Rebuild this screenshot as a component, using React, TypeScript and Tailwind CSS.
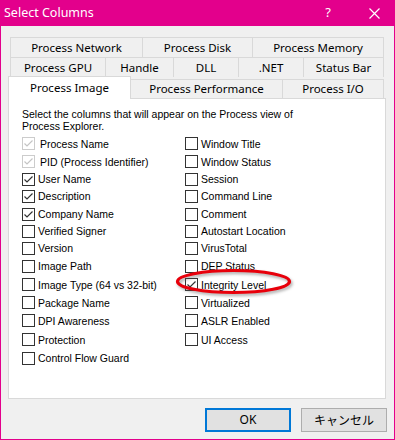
import React from "react";

type Item = { label: string; checked?: boolean; disabled?: boolean };

const rows: { left: Item; right?: Item; h: string }[] = [
  { left: { label: "Process Name", checked: true, disabled: true }, right: { label: "Window Title" }, h: "h-[17px]" },
  { left: { label: "PID (Process Identifier)", checked: true, disabled: true }, right: { label: "Window Status" }, h: "h-[19px]" },
  { left: { label: "User Name", checked: true }, right: { label: "Session" }, h: "h-[16px]" },
  { left: { label: "Description", checked: true }, right: { label: "Command Line" }, h: "h-[18px]" },
  { left: { label: "Company Name", checked: true }, right: { label: "Comment" }, h: "h-[18px]" },
  { left: { label: "Verified Signer" }, right: { label: "Autostart Location" }, h: "h-[16px]" },
  { left: { label: "Version" }, right: { label: "VirusTotal" }, h: "h-[18px]" },
  { left: { label: "Image Path" }, right: { label: "DEP Status" }, h: "h-[18px]" },
  { left: { label: "Image Type (64 vs 32-bit)" }, right: { label: "Integrity Level", checked: true }, h: "h-[19px]" },
  { left: { label: "Package Name" }, right: { label: "Virtualized" }, h: "h-[17px]" },
  { left: { label: "DPI Awareness" }, right: { label: "ASLR Enabled" }, h: "h-[19px]" },
  { left: { label: "Protection" }, right: { label: "UI Access" }, h: "h-[19px]" },
  { left: { label: "Control Flow Guard" }, h: "h-[18px]" },
];

const tabFont = { fontFamily: '"Segoe UI", "Noto Sans", sans-serif' };

const CheckBox: React.FC<{ item: Item }> = ({ item }) => (
  <div className="flex items-center gap-[3px]">
    <div
      className={`w-[13px] h-[13px] border bg-white flex items-center justify-center ${
        item.disabled ? "border-[#cccccc]" : "border-[#333333]"
      }`}
    >
      {item.checked && (
        <svg width="11" height="11" viewBox="0 0 11 11">
          <polyline
            points="1.5,5.5 4,8 9.5,2.5"
            fill="none"
            stroke={item.disabled ? "#c4c4c4" : "#333333"}
            strokeWidth="1.2"
          />
        </svg>
      )}
    </div>
    <span className={item.disabled ? "ml-[2px] text-black" : "text-black"}>{item.label}</span>
  </div>
);

const Tab: React.FC<{ label: string; w: string; last?: boolean }> = ({ label, w, last }) => (
  <div
    className={`${w} h-full flex items-center justify-center border-t border-l border-[#d9d9d9] bg-[#f0f0f0] text-[11.5px] text-black ${
      last ? "border-r" : ""
    }`}
  >
    {label}
  </div>
);

export default function App() {
  return (
    <div className="w-[395px] h-[440px] flex flex-col bg-[#f0f0f0] border-x border-b border-[#e3008c]">
      {/* title bar */}
      <div className="h-[26px] -mx-px bg-[#e3008c] flex items-center text-white" style={tabFont}>
        <span className="ml-[4px] text-[12.5px] flex-1">Select Columns</span>
        <span className="text-[13px] mr-[38px]">?</span>
        <svg width="11" height="11" viewBox="0 0 11 11" className="mr-[15px]">
          <path d="M0.5 0.5 L10.5 10.5 M10.5 0.5 L0.5 10.5" stroke="white" strokeWidth="1.2" />
        </svg>
      </div>

      {/* tabs */}
      <div className="mt-[11px]" style={tabFont}>
        <div className="ml-[9px] w-[374px] h-[20px] flex">
          <Tab label="Process Network" w="w-[132px]" />
          <Tab label="Process Disk" w="w-[110px]" />
          <Tab label="Process Memory" w="flex-1" last />
        </div>
        <div className="ml-[9px] w-[374px] h-[20px] flex">
          <Tab label="Process GPU" w="w-[95px]" />
          <Tab label="Handle" w="w-[68px]" />
          <Tab label="DLL" w="w-[65px]" />
          <Tab label=".NET" w="w-[65px]" />
          <Tab label="Status Bar" w="flex-1" last />
        </div>
        <div className="ml-[7px] w-[376px] h-[21px] flex items-end relative z-10">
          <div className="w-[123px] h-[23px] -mb-px bg-white border-t border-x border-[#d9d9d9] flex justify-center pt-[2px] text-[11.5px] text-black">
            Process Image
          </div>
          <div className="flex-1 h-[19px] flex -ml-px">
            <Tab label="Process Performance" w="w-[152px]" />
            <Tab label="Process I/O" w="flex-1" last />
          </div>
        </div>
      </div>

      {/* panel */}
      <div
        className="ml-[7px] w-[378px] h-[301px] bg-white border border-[#d9d9d9] relative pt-[9px] pl-[13px] text-[10.5px] leading-[12px] text-black"
        style={{ fontFamily: '"Liberation Sans", Arial, sans-serif' }}
      >
        <p>Select the columns that will appear on the Process view of</p>
        <p>Process Explorer.</p>
        <div className="mt-[3px] grid grid-cols-[163px_1fr]">
          {rows.map((r, i) => (
            <React.Fragment key={i}>
              <div className={`${r.h} flex items-center`}>
                <CheckBox item={r.left} />
              </div>
              <div className={`${r.h} flex items-center`}>
                {r.right && <CheckBox item={r.right} />}
              </div>
            </React.Fragment>
          ))}
        </div>

        {/* highlight ellipse */}
        <svg
          className="absolute left-[165px] top-[169px] pointer-events-none"
          width="122"
          height="30"
          viewBox="0 0 122 30"
        >
          <defs>
            <filter id="blur" x="-20%" y="-40%" width="140%" height="180%">
              <feGaussianBlur stdDeviation="1.5" />
            </filter>
          </defs>
          <ellipse cx="61" cy="15.5" rx="56" ry="11" fill="none" stroke="#555" strokeWidth="3" opacity="0.5" filter="url(#blur)" />
          <ellipse cx="59.5" cy="13.5" rx="56" ry="11" fill="none" stroke="#e8000b" strokeWidth="3.2" />
        </svg>
      </div>

      {/* buttons */}
      <div className="flex justify-end mt-[9px] mr-[7px] gap-[10px] text-[12px] text-black" style={tabFont}>
        <button className="w-[86px] h-[24px] bg-[#e1e1e1] border-2 border-[#0078d7]">OK</button>
        <button
          className="w-[86px] h-[24px] bg-[#e1e1e1] border border-[#adadad]"
          style={{ fontFamily: '"Segoe UI", "Noto Sans CJK JP", sans-serif' }}
        >
          キャンセル
        </button>
      </div>
    </div>
  );
}
